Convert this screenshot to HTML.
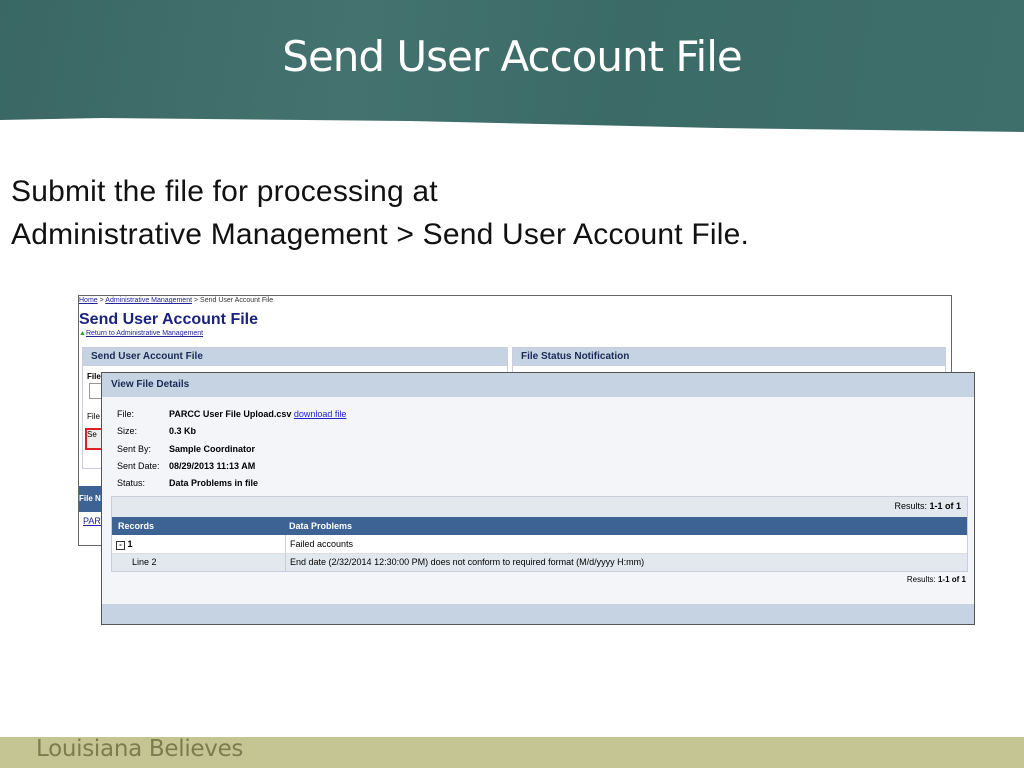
<!DOCTYPE html>
<html><head><style>
body{margin:0;width:1024px;height:768px;position:relative;overflow:hidden;background:#fff;font-family:"Liberation Sans",sans-serif}
.a{position:absolute}
.hdr{left:0;top:0;width:1024px;height:135px;background:linear-gradient(100deg,#3a6764 0%,#44736f 35%,#3c6b67 60%,#3f6f6b 100%);clip-path:polygon(0 0,100% 0,100% 132px,70% 128px,40% 121px,10% 118px,0 120px)}
.t{left:0;width:1024px;top:32px;text-align:center;color:#fff;font-size:42px;font-family:"DejaVu Sans",sans-serif;letter-spacing:-1px}
.body{left:11px;top:170px;font-size:30px;line-height:43px;color:#111;letter-spacing:0.2px}
.ss{left:78px;top:295px;width:872px;height:249px;border:1px solid #666;background:#fff;font-size:10px}
.lnk{color:#23239c;text-decoration:underline}
.ph{background:#c6d3e3;color:#1a2a55;font-weight:bold;font-size:10px;height:18px;line-height:18px;padding-left:8px}
.dlg{left:101px;top:372px;width:872px;height:251px;border:1px solid #555;background:#f3f5f9;font-size:9px}
.row{position:absolute;left:15px}
.row b{position:absolute;left:52px;white-space:nowrap}
.foot{left:0;top:737px;width:1024px;height:31px;background:#c4c593}
</style></head><body>
<div class="a hdr"></div>
<div class="a t">Send User Account File</div>
<div class="a body">Submit the file for processing at<br>Administrative Management &gt; Send User Account File.</div>

<div class="a ss">
 <div style="position:absolute;left:0;top:1px;font-size:7px;color:#333"><span class="lnk">Home</span> &gt; <span class="lnk">Administrative Management</span> &gt; Send User Account File</div>
 <div style="position:absolute;left:0;top:15px;font-size:16px;font-weight:bold;color:#1a237e">Send User Account File</div>
 <div style="position:absolute;left:0;top:34px;font-size:7px"><span style="color:#2a2">▲</span><span class="lnk">Return to Administrative Management</span></div>
 <div style="position:absolute;left:3px;top:51px;width:424px;height:120px;border:1px solid #ccd">
  <div class="ph">Send User Account File</div>
  <div style="position:absolute;left:4px;top:24px;font-size:8px;font-weight:bold">File</div>
  <div style="position:absolute;left:6px;top:35px;width:12px;height:14px;border:1px solid #999"></div>
  <div style="position:absolute;left:4px;top:64px;font-size:8px">File</div>
  <div style="position:absolute;left:2px;top:80px;width:18px;height:18px;border:2px solid #d22;background:#eee;font-size:8px">Se</div>
 </div>
 <div style="position:absolute;left:0;top:190px;width:25px;height:26px;background:#3c6394;color:#fff;font-weight:bold;font-size:8px;line-height:26px">File N</div>
 <div style="position:absolute;left:4px;top:220px;font-size:9px" class="lnk">PARC</div>
 <div style="position:absolute;left:433px;top:51px;width:432px;height:24px;border:1px solid #ccd">
  <div class="ph">File Status Notification</div>
 </div>
</div>

<div class="a dlg">
 <div style="height:24px;background:#c6d3e3;color:#1a2a55;font-weight:bold;font-size:10px;line-height:24px;padding-left:9px">View File Details</div>
 <div class="row" style="top:36px">File:<b>PARCC User File Upload.csv <span class="lnk" style="font-weight:normal;color:#22c">download file</span></b></div>
 <div class="row" style="top:53px">Size:<b>0.3 Kb</b></div>
 <div class="row" style="top:71px">Sent By:<b>Sample Coordinator</b></div>
 <div class="row" style="top:88px">Sent Date:<b>08/29/2013 11:13 AM</b></div>
 <div class="row" style="top:105px">Status:<b>Data Problems in file</b></div>
 <div style="position:absolute;left:9px;top:123px;width:855px;height:74px;background:#e3e8ef;border:1px solid #ccd">
  <div style="position:absolute;right:6px;top:4px;font-size:9px">Results: <b>1-1 of 1</b></div>
  <div style="position:absolute;left:0;top:20px;width:855px;height:18px;background:#3c6394;color:#fff;font-weight:bold;line-height:18px">
   <span style="position:absolute;left:6px">Records</span><span style="position:absolute;left:177px">Data Problems</span></div>
  <div style="position:absolute;left:0;top:38px;width:855px;height:18px;background:#fff;line-height:18px;border-bottom:1px solid #ddd">
   <span style="position:absolute;left:4px;font-weight:bold"><span style="display:inline-block;width:7px;height:7px;border:1px solid #333;line-height:6px;font-size:8px;text-align:center">-</span> 1</span>
   <span style="position:absolute;left:173px;border-left:1px solid #ccc;padding-left:4px">Failed accounts</span></div>
  <div style="position:absolute;left:0;top:57px;width:855px;height:17px;line-height:17px">
   <span style="position:absolute;left:20px">Line 2</span>
   <span style="position:absolute;left:173px;border-left:1px solid #ccc;padding-left:4px">End date (2/32/2014 12:30:00 PM) does not conform to required format (M/d/yyyy H:mm)</span></div>
 </div>
 <div style="position:absolute;right:8px;top:202px;font-size:8px">Results: <b>1-1 of 1</b></div>
 <div style="position:absolute;left:0;bottom:0;width:872px;height:20px;background:#c6d3e3"></div>
</div>

<div class="a foot"></div>
<div class="a" style="left:36px;top:736px;font-size:23px;color:#7c7c4c;font-family:'DejaVu Sans',sans-serif;letter-spacing:-0.3px">Louisiana Believes</div>
</body></html>
